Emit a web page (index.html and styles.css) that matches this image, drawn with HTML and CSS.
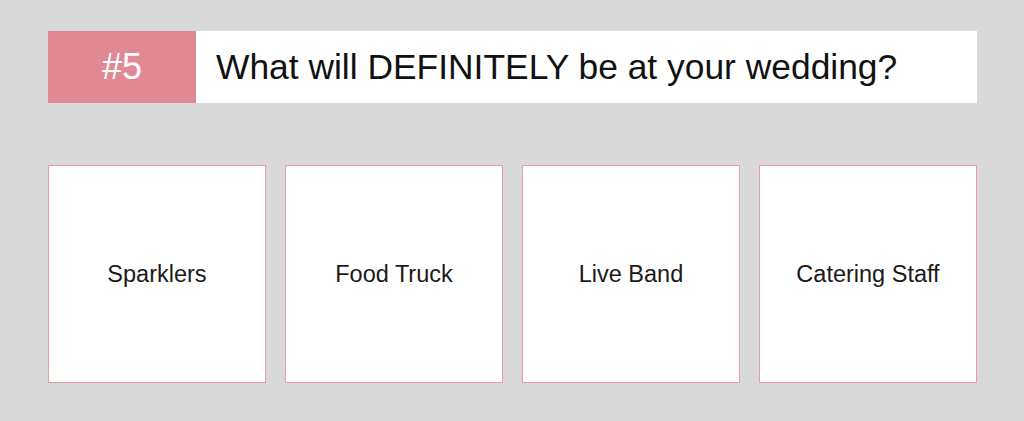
FILE: index.html
```html
<!DOCTYPE html>
<html>
<head>
<meta charset="utf-8">
<link rel="stylesheet" href="styles.css">
</head>
<body>
<div class="page">
  <div class="question">
    <div class="num">#5</div>
    <div class="qtext">What will DEFINITELY be at your wedding?</div>
  </div>
  <div class="options">
    <div class="card">Sparklers</div>
    <div class="card">Food Truck</div>
    <div class="card">Live Band</div>
    <div class="card">Catering Staff</div>
  </div>
</div>
</body>
</html>
```
FILE: styles.css
```css
html, body {
  margin: 0;
  padding: 0;
  background: #d9d9d9;
  font-family: "Liberation Sans", Arial, sans-serif;
}
.page {
  width: 929px;
  padding: 31px 0 0 48px;
}
.question {
  display: flex;
  height: 72px;
  background: #ffffff;
}
.num {
  width: 148px;
  background: #e08995;
  color: #ffffff;
  font-size: 36px;
  display: flex;
  align-items: center;
  justify-content: center;
}
.qtext {
  flex: 1;
  display: flex;
  align-items: center;
  padding-left: 20px;
  font-size: 35.4px;
  color: #111111;
}
.options {
  margin-top: 62px;
  display: grid;
  grid-template-columns: repeat(4, 1fr);
  gap: 19px;
}
.card {
  box-sizing: border-box;
  height: 218px;
  background: #ffffff;
  border: 1px solid #ee9aa5;
  display: flex;
  align-items: center;
  justify-content: center;
  font-size: 23.5px;
  color: #1a1a1a;
}
```
